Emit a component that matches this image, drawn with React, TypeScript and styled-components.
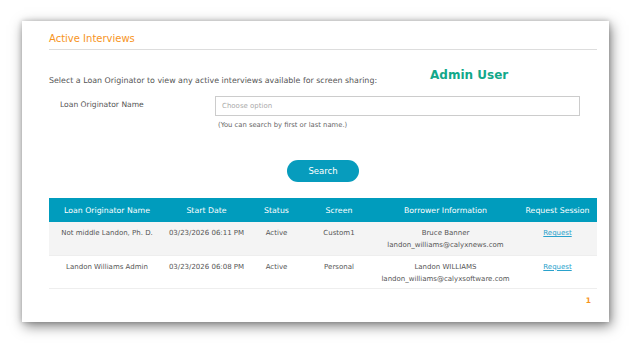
import styled, { createGlobalStyle } from 'styled-components';

interface Interview {
  originator: string
  startDate: string
  status: string
  screen: string
  borrower: string
  email: string
}

const interviews: Interview[] = [
  {
    originator: 'Not middle Landon, Ph. D.',
    startDate: '03/23/2026 06:11 PM',
    status: 'Active',
    screen: 'Custom1',
    borrower: 'Bruce Banner',
    email: 'landon_williams@calyxnews.com',
  },
  {
    originator: 'Landon Williams Admin',
    startDate: '03/23/2026 06:08 PM',
    status: 'Active',
    screen: 'Personal',
    borrower: 'Landon WILLIAMS',
    email: 'landon_williams@calyxsoftware.com',
  },
];

const columns = [
  { title: 'Loan Originator Name', width: 116 },
  { title: 'Start Date', width: 83 },
  { title: 'Status', width: 57 },
  { title: 'Screen', width: 68 },
  { title: 'Borrower Information', width: 145 },
  { title: 'Request Session', width: 79 },
];

const App: React.FC = () => {
  return (
    <Page>
      <GlobalStyle />
      <Card>
        <Title>Active Interviews</Title>
        <IntroRow>
          <Intro>Select a Loan Originator to view any active interviews available for screen sharing:</Intro>
          <AdminName>Admin User</AdminName>
        </IntroRow>
        <FormRow>
          <Label>Loan Originator Name</Label>
          <Field>
            <Select>Choose option</Select>
            <Hint>(You can search by first or last name.)</Hint>
          </Field>
        </FormRow>
        <ButtonRow>
          <SearchButton>Search</SearchButton>
        </ButtonRow>
        <Table>
          <colgroup>
            {columns.map(c => <col key={c.title} style={{ width: c.width }} />)}
          </colgroup>
          <thead>
            <tr>
              {columns.map(c => <Th key={c.title}>{c.title}</Th>)}
            </tr>
          </thead>
          <tbody>
            {interviews.map((row, i) => (
              <Tr key={row.originator} $striped={i % 2 === 0}>
                <Td>{row.originator}</Td>
                <Td>{row.startDate}</Td>
                <Td>{row.status}</Td>
                <Td>{row.screen}</Td>
                <Td>
                  <div>{row.borrower}</div>
                  <div>{row.email}</div>
                </Td>
                <Td><RequestLink href="#">Request</RequestLink></Td>
              </Tr>
            ))}
          </tbody>
        </Table>
        <Pager>
          <PageNumber>1</PageNumber>
        </Pager>
      </Card>
    </Page>
  );
}

export default App;

const GlobalStyle = createGlobalStyle`
  body {
    margin: 0;
    background: #ffffff;
    font-family: "DejaVu Sans", Tahoma, sans-serif;
    color: #555555;
  }
`

const Page = styled.div`
  padding: 21px 22px;
`

const Card = styled.div`
  width: 587px;
  height: 301px;
  box-sizing: border-box;
  padding: 0 12px 0 27px;
  background: #ffffff;
  box-shadow: 2px 4px 12px rgba(0, 0, 0, 0.5), 0 0 5px rgba(0, 0, 0, 0.2);
`

const Title = styled.h2`
  margin: 0;
  padding: 12px 0 4px;
  font-size: 10px;
  font-weight: normal;
  color: #f7941d;
  line-height: 12px;
  border-bottom: 1px solid #dddddd;
`

const IntroRow = styled.div`
  display: flex;
  align-items: flex-end;
  padding-top: 14px;
  height: 22px;
`

const Intro = styled.p`
  margin: 0;
  font-size: 7.9px;
  line-height: 10px;
  color: #555555;
`

const AdminName = styled.div`
  margin-left: 53px;
  margin-bottom: 3px;
  font-size: 12px;
  font-weight: bold;
  color: #12a88a;
  line-height: 16px;
`

const FormRow = styled.div`
  display: grid;
  grid-template-columns: 166px 365px;
  margin-top: 10px;
`

const Label = styled.div`
  padding: 4px 0 0 11px;
  font-size: 7.6px;
  line-height: 10px;
`

const Field = styled.div`
  display: flex;
  flex-direction: column;
`

const Select = styled.div`
  height: 20px;
  box-sizing: border-box;
  border: 1px solid #cccccc;
  padding: 0 6px;
  font-size: 7px;
  line-height: 18px;
  color: #aaaaaa;
`

const Hint = styled.div`
  margin-top: 5px;
  padding-left: 3px;
  font-size: 6.8px;
  line-height: 9px;
  color: #666666;
`

const ButtonRow = styled.div`
  display: flex;
  justify-content: center;
  margin-top: 30px;
`

const SearchButton = styled.button`
  width: 72px;
  height: 22px;
  border: none;
  border-radius: 11px;
  background: #079cbd;
  color: #ffffff;
  font-family: "DejaVu Sans", Tahoma, sans-serif;
  font-size: 8.5px;
  padding: 0;
`

const Table = styled.table`
  margin-top: 16px;
  width: 548px;
  border-collapse: collapse;
  table-layout: fixed;
`

const Th = styled.th`
  height: 24px;
  padding: 0;
  background: #009cbd;
  color: #ffffff;
  font-size: 7.8px;
  font-weight: normal;
  text-align: center;
`

const Tr = styled.tr<{ $striped: boolean }>`
  background: ${p => (p.$striped ? '#f4f4f4' : '#ffffff')};
  border-bottom: 1px solid #eeeeee;
`

const Td = styled.td`
  height: 33px;
  box-sizing: border-box;
  padding: 5px 0 0;
  vertical-align: top;
  text-align: center;
  font-size: 7px;
  line-height: 12px;
  color: #555555;
  white-space: nowrap;
`

const RequestLink = styled.a`
  color: #2aa2cc;
  text-decoration: underline;
`

const Pager = styled.div`
  display: flex;
  justify-content: flex-end;
  padding: 7px 6px 0 0;
`

const PageNumber = styled.span`
  font-size: 7.5px;
  font-weight: bold;
  color: #f7941d;
`
